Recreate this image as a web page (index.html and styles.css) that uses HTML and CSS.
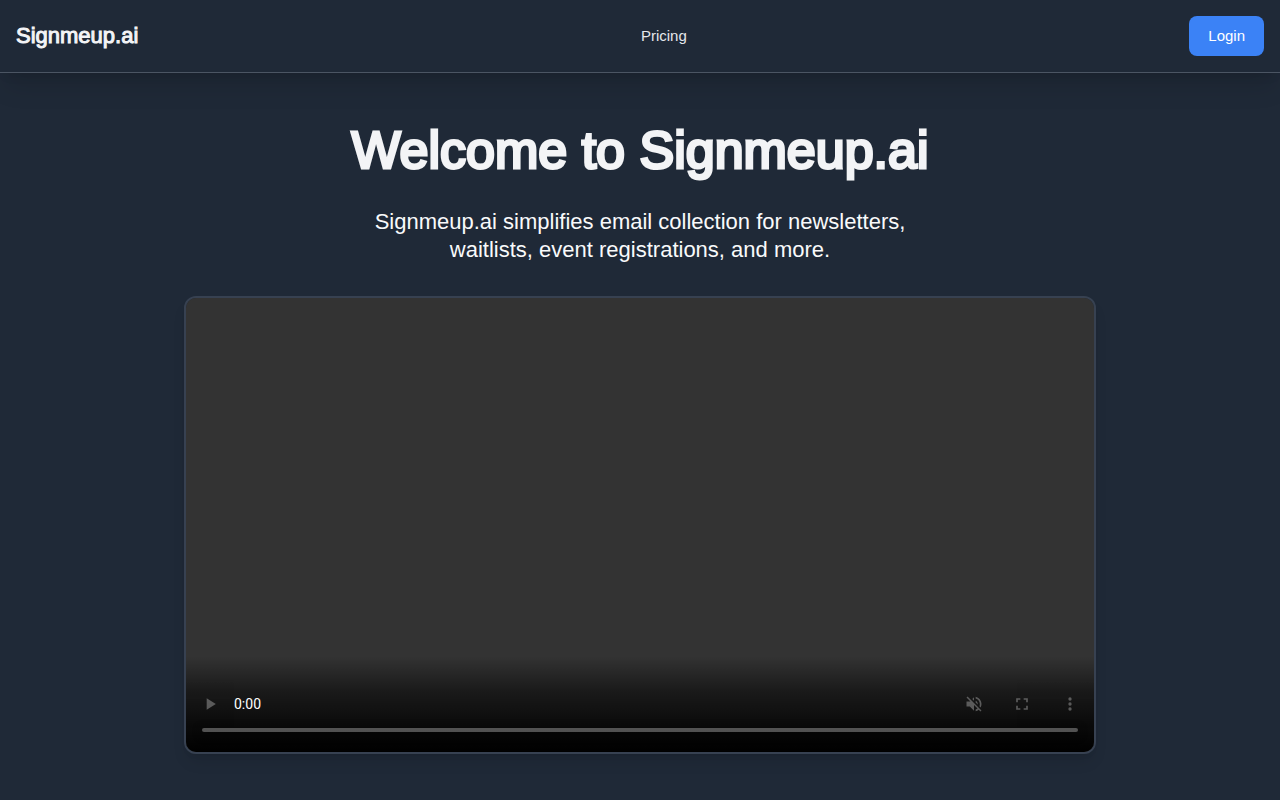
FILE: index.html
```html
<!DOCTYPE html>
<html lang="en">
<head>
    <meta charset="UTF-8">
    <meta name="viewport" content="width=device-width, initial-scale=1.0">
    <title>Signmeup.ai</title>
    <link rel="stylesheet" href="styles.css">
</head>
<body>
    <header class="navbar">
        <a class="brand" href="#">Signmeup.ai</a>
        <nav>
            <a class="nav-link" href="#pricing">Pricing</a>
        </nav>
        <button class="login" type="button">Login</button>
    </header>

    <main class="hero">
        <h1>Welcome to Signmeup.ai</h1>
        <p class="tagline">Signmeup.ai simplifies email collection for newsletters, waitlists, event registrations, and more.</p>
        <video class="demo" controls muted></video>
    </main>
</body>
</html>
```
FILE: styles.css
```css
* {
    box-sizing: border-box;
}
body {
    margin: 0;
    min-height: 100vh;
    background-color: #1f2937;
    color: #f9fafb;
    font-family: "Liberation Sans", Arial, sans-serif;
}
a {
    color: inherit;
    text-decoration: none;
}

/* Top bar */
.navbar {
    display: flex;
    justify-content: space-between;
    align-items: center;
    padding: 16px;
    border-bottom: 1px solid #4b5563;
    box-shadow: 0 20px 25px -5px rgba(0, 0, 0, 0.1), 0 8px 10px -6px rgba(0, 0, 0, 0.1);
}
.brand {
    font-size: 22px;
    color: #f3f4f6;
    -webkit-text-stroke: 1px #f3f4f6;
}
.nav-link {
    font-size: 15px;
    color: #e5e7eb;
}
.login {
    height: 40px;
    padding: 0 19px 2px;
    border: none;
    border-radius: 8px;
    background-color: #3b82f6;
    color: white;
    font-family: inherit;
    font-size: 15px;
    cursor: pointer;
}
.login:hover {
    background-color: #2563eb;
}

/* Hero */
.hero {
    display: flex;
    flex-direction: column;
    align-items: center;
    padding: 47px 16px;
}
h1 {
    margin: 0;
    font-size: 52px;
    font-weight: normal;
    line-height: 60px;
    color: #f3f4f6;
    -webkit-text-stroke: 3px #f3f4f6;
}
.tagline {
    max-width: 576px;
    margin: 28px 0 32px;
    font-size: 22px;
    line-height: 28px;
    text-align: center;
}
.demo {
    width: 100%;
    max-width: 912px;
    aspect-ratio: 912 / 458;
    border: 2px solid #374151;
    border-radius: 12px;
    box-shadow: 0 10px 15px -3px rgba(0, 0, 0, 0.1), 0 4px 6px -4px rgba(0, 0, 0, 0.1);
}
/* softer fade behind the player controls */
.demo::-webkit-media-controls-panel {
    background-image: linear-gradient(to top, #000, rgba(0, 0, 0, 0.85) 20px, rgba(0, 0, 0, 0.5) 60px, transparent 96px);
    background-size: 100% 96px;
    background-position: bottom;
    background-repeat: no-repeat;
}
```
